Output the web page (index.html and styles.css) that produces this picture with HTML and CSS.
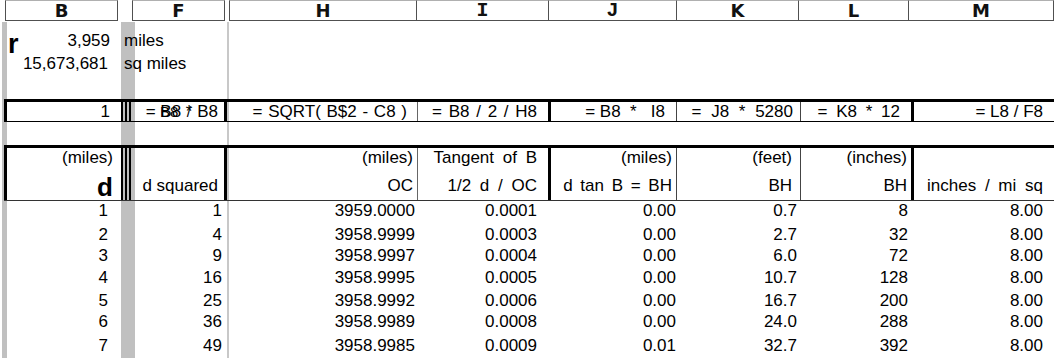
FILE: index.html
```html
<!DOCTYPE html>
<html>
<head>
<meta charset="utf-8">
<link rel="stylesheet" href="styles.css">
</head>
<body>
<div class="colhdr">
  <div class="sp5"></div>
  <div class="ch chB">B</div>
  <div class="sp14"></div>
  <div class="ch chF">F</div>
  <div class="sp4"></div>
  <div class="ch chH">H</div>
  <div class="ch join chI mono">I</div>
  <div class="ch join chJ mono">J</div>
  <div class="ch join chK">K</div>
  <div class="ch join chL">L</div>
  <div class="ch join chM">M</div>
</div>
<div class="sheet">
  <div class="band top1">
    <div class="c b rcell"><span class="rlabel">r</span><span class="num">3,959</span></div>
    <div class="c unit">miles</div>
  </div>
  <div class="band top2">
    <div class="c b">15,673,681</div>
    <div class="c unit">sq miles</div>
  </div>
  <div class="blank gap1"></div>
  <div class="band formula">
    <div class="c b">1</div>
    <div class="c g"></div>
    <div class="c f">= B8 * B8<span class="ghost">B8  /</span></div>
    <div class="c h">= SQRT( B$2 - C8 )</div>
    <div class="c i">= B8 / 2 / H8</div>
    <div class="c j">= B8  *   I8</div>
    <div class="c k">= J8 * 5280</div>
    <div class="c l">= K8 * 12</div>
    <div class="c m">= L8 / F8</div>
  </div>
  <div class="blank gap2"></div>
  <div class="band head">
    <div class="c b"><div class="l1">(miles)</div><div class="l2 big">d</div></div>
    <div class="c g"></div>
    <div class="c f"><div class="l1"></div><div class="l2">d squared</div></div>
    <div class="c h"><div class="l1">(miles)</div><div class="l2">OC</div></div>
    <div class="c i"><div class="l1">Tangent of B</div><div class="l2">1/2 d / OC</div></div>
    <div class="c j"><div class="l1">(miles)</div><div class="l2">d tan B = BH</div></div>
    <div class="c k"><div class="l1">(feet)</div><div class="l2">BH</div></div>
    <div class="c l"><div class="l1">(inches)</div><div class="l2">BH</div></div>
    <div class="c m"><div class="l1"></div><div class="l2">inches / mi sq</div></div>
  </div>
  <div class="data">
    <div class="band dr r1"><div class="c b">1</div><div class="c f">1</div><div class="c h">3959.0000</div><div class="c i">0.0001</div><div class="c j">0.00</div><div class="c k">0.7</div><div class="c l">8</div><div class="c m">8.00</div></div>
    <div class="band dr r2"><div class="c b">2</div><div class="c f">4</div><div class="c h">3958.9999</div><div class="c i">0.0003</div><div class="c j">0.00</div><div class="c k">2.7</div><div class="c l">32</div><div class="c m">8.00</div></div>
    <div class="band dr r3"><div class="c b">3</div><div class="c f">9</div><div class="c h">3958.9997</div><div class="c i">0.0004</div><div class="c j">0.00</div><div class="c k">6.0</div><div class="c l">72</div><div class="c m">8.00</div></div>
    <div class="band dr r4"><div class="c b">4</div><div class="c f">16</div><div class="c h">3958.9995</div><div class="c i">0.0005</div><div class="c j">0.00</div><div class="c k">10.7</div><div class="c l">128</div><div class="c m">8.00</div></div>
    <div class="band dr r5"><div class="c b">5</div><div class="c f">25</div><div class="c h">3958.9992</div><div class="c i">0.0006</div><div class="c j">0.00</div><div class="c k">16.7</div><div class="c l">200</div><div class="c m">8.00</div></div>
    <div class="band dr r6"><div class="c b">6</div><div class="c f">36</div><div class="c h">3958.9989</div><div class="c i">0.0008</div><div class="c j">0.00</div><div class="c k">24.0</div><div class="c l">288</div><div class="c m">8.00</div></div>
    <div class="band dr r7"><div class="c b">7</div><div class="c f">49</div><div class="c h">3958.9985</div><div class="c i">0.0009</div><div class="c j">0.01</div><div class="c k">32.7</div><div class="c l">392</div><div class="c m">8.00</div></div>
  </div>
</div>
</body>
</html>
```
FILE: styles.css
```css
* { box-sizing: border-box; }
html, body { margin: 0; padding: 0; }
body {
  width: 1054px;
  height: 358px;
  overflow: hidden;
  background: #fff;
  color: #000;
  font-family: "Liberation Sans", Arial, sans-serif;
  font-size: 17px;
}

/* column letter header */
.colhdr { display: flex; height: 21px; margin-bottom: 1px; }
.sp5 { width: 5px; }
.sp14 { width: 14px; }
.sp4 { width: 4px; }
.ch {
  height: 21px;
  border: 1px solid #505050;
  border-top-color: #b0b0b0;
  display: flex;
  align-items: center;
  justify-content: center;
  font-family: "DejaVu Sans", sans-serif;
  font-weight: bold;
  font-size: 18px;
  color: #111;
}
.ch.mono { font-family: "Liberation Mono", monospace; font-size: 20px; }
.ch.join { border-left: none; }
.chB { width: 113px; }
.chF { width: 93px; }
.chH { width: 188px; }
.chI { width: 132px; }
.chJ { width: 128px; }
.chK { width: 122px; }
.chL { width: 110px; }
.chM { width: 145px; }

/* sheet body */
.sheet {
  height: 336px;
  background:
    linear-gradient(#c0c0c0, #c0c0c0) 2px 0 / 5px 100% no-repeat,
    linear-gradient(#c0c0c0, #c0c0c0) 121px 0 / 14px 100% no-repeat,
    linear-gradient(#c8c8c8, #c8c8c8) 227px 0 / 2px 100% no-repeat;
}
.band {
  display: grid;
  grid-template-columns: 117px 14px 92px 2px 189px 133px 126px 124px 113px 140px;
  margin-left: 4px;
}
.c { text-align: right; white-space: pre; line-height: 20px; }
.b { grid-column: 1; }
.g { grid-column: 2; }
.f { grid-column: 3; }
.h { grid-column: 5; }
.i { grid-column: 6; }
.j { grid-column: 7; }
.k { grid-column: 8; }
.l { grid-column: 9; }
.m { grid-column: 10; }

/* top rows */
.top1 { height: 26px; }
.top2 { height: 23px; }
.top1 .c { padding-top: 9px; }
.top2 .c { padding-top: 6px; }
.top1 .b { padding-right: 11px; }
.top2 .b { padding-right: 13px; }
.rcell { display: flex; justify-content: space-between; align-items: flex-start; padding-left: 4px; }
.top1 .rcell { padding-top: 0; }
.rlabel { font-weight: bold; font-size: 27px; line-height: 12px; margin-top: 16px; }
.num { padding-top: 9px; }
.unit { grid-column: 2 / span 3; text-align: left; padding-left: 3px; }
.gap1 { height: 28px; }
.gap2 { height: 23px; }

/* bordered bands */
.formula { height: 23px; border-top: 3px solid #000; border-bottom: 1px solid #000; }
.formula .c { line-height: 19px; }
.head { height: 56px; border-top: 3px solid #000; border-bottom: 1px solid #333; }
.formula .b, .head .b { border-left: 3px solid #000; }
.formula .g, .head .g {
  background: linear-gradient(to right, #000 0 2px, transparent 2px 4px, #000 4px 6px, transparent 6px 8px, #000 8px 10px, transparent 10px);
}
.formula .f, .head .f { border-right: 3px solid #000; }
.formula .h, .head .h { border-right: 1px solid #666; }
.formula .i, .head .i { border-right: 3px solid #000; }
.formula .j, .head .j { border-right: 1px solid #444; }
.formula .k, .head .k { border-right: 1px solid #444; }
.formula .l, .head .l { border-right: 3px solid #000; }

.formula .b { padding-right: 11px; }
.formula .f { padding-right: 6px; position: relative; }
.formula .h { padding-right: 10px; word-spacing: 1px; }
.formula .i { padding-right: 11px; word-spacing: 2px; }
.formula .j { padding-right: 11px; }
.formula .k { padding-right: 7px; word-spacing: 5px; }
.formula .l { padding-right: 11px; word-spacing: 4px; }
.formula .m { padding-right: 11px; }
.ghost { position: absolute; left: 25px; top: 0; font-size: 15px; }

.head .c { word-spacing: 4px; }
.head .l1 { height: 20px; }
.head .l2 { margin-top: 8px; height: 20px; }
.head .l2.big { font-weight: bold; font-size: 26px; line-height: 24px; height: 24px; margin-top: 7px; }
.head .b { padding-right: 8px; }
.head .f { padding-right: 6px; word-spacing: 0; }
.head .h { padding-right: 4px; }
.head .i { padding-right: 11px; }
.head .j { padding-right: 4px; word-spacing: 3px; }
.head .k { padding-right: 8px; }
.head .l { padding-right: 4px; }
.head .m { padding-right: 11px; }

/* data rows */
.dr .b { padding-right: 13px; }
.dr .f { padding-right: 5px; }
.dr .h { padding-right: 3px; }
.dr .i { padding-right: 14px; }
.dr .j { padding-right: 1px; }
.dr .k { padding-right: 4px; }
.dr .l { padding-right: 6px; }
.dr .m { padding-right: 11px; }
.r1 { height: 24px; }
.r2 { height: 21px; }
.r3 { height: 22px; }
.r4 { height: 23px; }
.r5 { height: 21px; }
.r6 { height: 24px; }
.r7 { height: 22px; }
```
